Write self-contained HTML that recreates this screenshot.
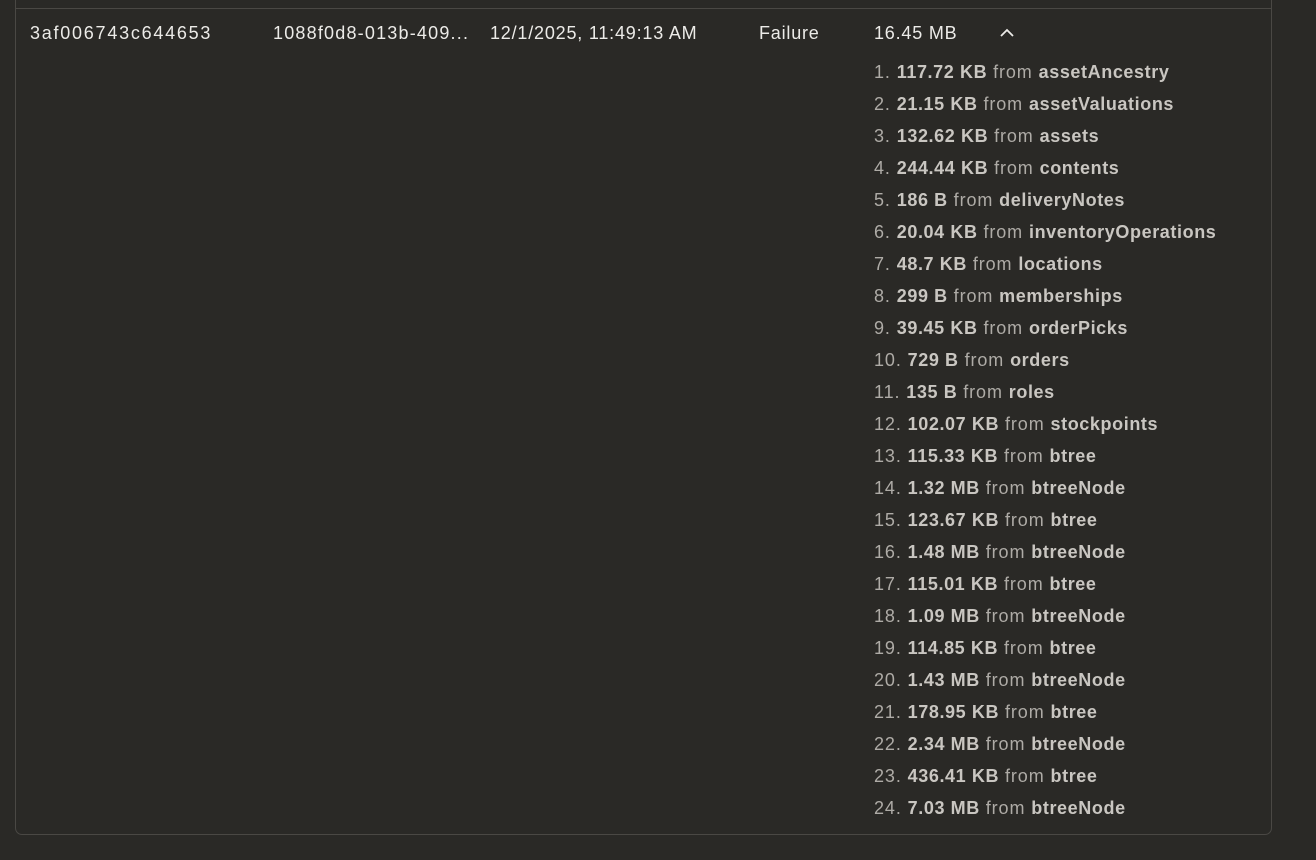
<!DOCTYPE html>
<html><head><style>
html,body{margin:0;padding:0;background:#2a2926;width:1316px;height:860px;overflow:hidden;font-family:"Liberation Sans",sans-serif;}
.card{position:absolute;left:15px;top:-20px;width:1257px;height:855px;border:1px solid #4a4844;border-radius:7px;box-sizing:border-box;}
.sep{position:absolute;left:16px;top:8px;width:1255px;height:1px;background:#4a4844;}
.c{position:absolute;top:22px;font-size:18px;color:#ecebe8;white-space:nowrap;line-height:22px;letter-spacing:0.8px;}
ol{position:absolute;left:874px;top:60px;margin:0;padding:0;list-style:none;font-size:18px;color:#aeaba6;letter-spacing:0.9px;}
li{height:32px;line-height:24px;white-space:nowrap;}
b{color:#c9c6c1;letter-spacing:0.6px;}
</style></head><body>
<div class="card"></div>
<div class="sep"></div>
<div class="c" style="left:30px;letter-spacing:1.75px">3af006743c644653</div>
<div class="c" style="left:273px;letter-spacing:1.2px">1088f0d8-013b-409...</div>
<div class="c" style="left:490px">12/1/2025, 11:49:13 AM</div>
<div class="c" style="left:759px">Failure</div>
<div class="c" style="left:874px">16.45 MB</div>
<svg style="position:absolute;left:999px;top:27px" width="16" height="12" viewBox="0 0 16 12"><path d="M2 9 L8 3 L14 9" fill="none" stroke="#ecebe8" stroke-width="1.8"/></svg>
<ol>
<li>1. <b>117.72 KB</b> from <b>assetAncestry</b></li>
<li>2. <b>21.15 KB</b> from <b>assetValuations</b></li>
<li>3. <b>132.62 KB</b> from <b>assets</b></li>
<li>4. <b>244.44 KB</b> from <b>contents</b></li>
<li>5. <b>186 B</b> from <b>deliveryNotes</b></li>
<li>6. <b>20.04 KB</b> from <b>inventoryOperations</b></li>
<li>7. <b>48.7 KB</b> from <b>locations</b></li>
<li>8. <b>299 B</b> from <b>memberships</b></li>
<li>9. <b>39.45 KB</b> from <b>orderPicks</b></li>
<li>10. <b>729 B</b> from <b>orders</b></li>
<li>11. <b>135 B</b> from <b>roles</b></li>
<li>12. <b>102.07 KB</b> from <b>stockpoints</b></li>
<li>13. <b>115.33 KB</b> from <b>btree</b></li>
<li>14. <b>1.32 MB</b> from <b>btreeNode</b></li>
<li>15. <b>123.67 KB</b> from <b>btree</b></li>
<li>16. <b>1.48 MB</b> from <b>btreeNode</b></li>
<li>17. <b>115.01 KB</b> from <b>btree</b></li>
<li>18. <b>1.09 MB</b> from <b>btreeNode</b></li>
<li>19. <b>114.85 KB</b> from <b>btree</b></li>
<li>20. <b>1.43 MB</b> from <b>btreeNode</b></li>
<li>21. <b>178.95 KB</b> from <b>btree</b></li>
<li>22. <b>2.34 MB</b> from <b>btreeNode</b></li>
<li>23. <b>436.41 KB</b> from <b>btree</b></li>
<li>24. <b>7.03 MB</b> from <b>btreeNode</b></li>
</ol>
</body></html>
